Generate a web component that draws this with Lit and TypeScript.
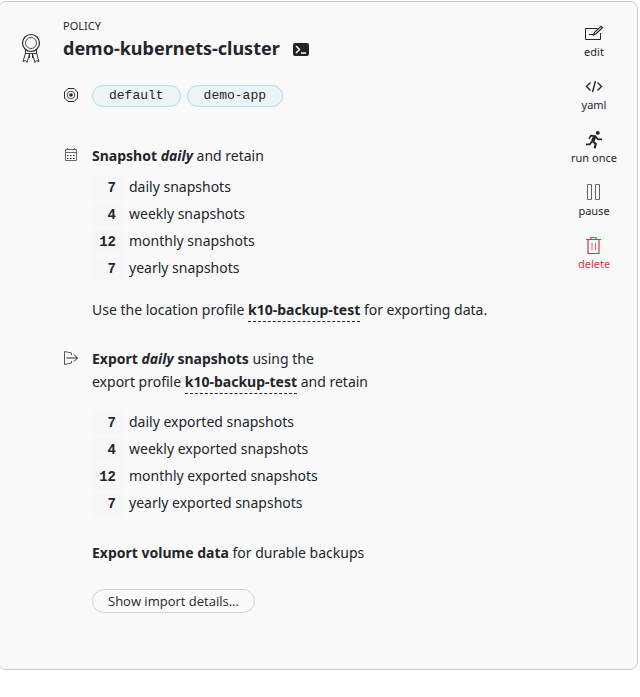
import { LitElement, html, css, svg } from "lit";
import { customElement, property } from "lit/decorators.js";

type Row = { count: number; label: string };

const snapshotRows: Row[] = [
  { count: 7, label: "daily snapshots" },
  { count: 4, label: "weekly snapshots" },
  { count: 12, label: "monthly snapshots" },
  { count: 7, label: "yearly snapshots" },
];

const exportRows: Row[] = [
  { count: 7, label: "daily exported snapshots" },
  { count: 4, label: "weekly exported snapshots" },
  { count: 12, label: "monthly exported snapshots" },
  { count: 7, label: "yearly exported snapshots" },
];

const icons = {
  edit: svg`<path d="M12.500 3.500H.5v11h15V8"/><path d="M4 9.500H9"/><path d="M8.500 9.800l1-2.500 6.500-6 1.500 1.500-6.500 6z" stroke-width="1.200"/>`,
  yaml: svg`<path d="M5.500 4.500L1.500 8.500l4 4M12.500 4.500l4 4-4 4" stroke-width="1.400"/><path d="M10.500 3L7.500 14" stroke-width="1.400"/>`,
  run: svg`<circle cx="12.800" cy="1.900" r="1.900" fill="currentColor" stroke="none"/><path d="M4 7.600l2-3 4.200.4 2.500 3.200 4.300.2M1 13.300h3.800l2.200-3" stroke-width="1.700"/><path d="M10 5L7.300 10l3.400 2.700-1 4.600" stroke-width="2.100"/><path d="M9.800 5.500L8 9.500" stroke-width="3.200"/>`,
  pause: svg`<path d="M2.500 .5h4v15h-4zM10.500 .5h4v15h-4z" stroke="#666"/>`,
  delete: svg`<path d="M1 2.500h15M6 2V.5h5V2" stroke-width="1.200"/><path d="M3 3v13.500h11V3" stroke-width="1.200"/><path d="M7 6v7M10.500 6v7" opacity=".8"/>`,
};

@customElement("action-button")
class ActionButton extends LitElement {
  @property() icon: keyof typeof icons = "edit";
  @property() label = "";

  static styles = css`
    :host { display: block; }
    .action {
      display: flex;
      flex-direction: column;
      align-items: center;
      gap: 1px;
      width: 100%;
      padding: 0;
      border: 0;
      background: none;
      color: #22262b;
      font: 11px/16px "Noto Sans", sans-serif;
      cursor: pointer;
    }
    .danger { color: #dc3545; }
    svg {
      width: 18px;
      height: 18px;
      fill: none;
      stroke: currentColor;
      overflow: visible;
    }
  `;

  render() {
    return html`<button class="action ${this.icon === "delete" ? "danger" : ""}" type="button">
      <svg viewBox="0 0 18 18" aria-hidden="true">${icons[this.icon]}</svg>
      <span>${this.label}</span>
    </button>`;
  }
}

@customElement("retention-list")
class RetentionList extends LitElement {
  @property({ attribute: false }) rows: Row[] = [];

  static styles = css`
    :host { display: block; }
    .list {
      display: grid;
      gap: 4px;
      margin: 0;
      padding: 0;
      list-style: none;
    }
    .row { display: flex; align-items: baseline; gap: 5px; height: 23px; line-height: 23px; }
    .count {
      box-sizing: border-box;
      width: 32px;
      padding-right: 8px;
      background: #f7f7f7;
      text-align: right;
      font-family: "Liberation Mono", monospace;
      font-size: 14px;
      font-weight: 700;
    }
  `;

  render() {
    return html`<ul class="list">
      ${this.rows.map(
        (r) => html`<li class="row"><span class="count">${r.count}</span><span>${r.label}</span></li>`,
      )}
    </ul>`;
  }
}

@customElement("app-root")
class AppRoot extends LitElement {
  static styles = css`
    :host {
      display: block;
      color: #22262b;
      font: 14px/23px "Noto Sans", sans-serif;
    }
    .card {
      display: grid;
      grid-template-columns: 64px 1fr 60px;
      margin: 1px 2px 0 -2px;
      padding: 16px 13px 56px 0;
      border: 1px solid #c9cbcc;
      border-radius: 8px;
      background: #f9f9f9;
    }
    svg { fill: none; stroke: currentColor; }
    .medal { width: 20px; height: 32px; margin: 14px 0 0 22px; }
    .kind { font-size: 11px; line-height: 16px; }
    .title { display: flex; align-items: center; gap: 13px; }
    h1 { margin: 0; font-size: 18px; line-height: 29px; }
    .terminal { width: 16px; height: 16px; }
    .section { display: grid; grid-template-columns: 29px 1fr; }
    .icon { width: 16px; height: 16px; margin-top: 3px; }
    .targets { margin-top: 22px; }
    .chips { display: flex; gap: 6px; }
    .chip {
      padding: 0 16px;
      border: 1px solid #a9dfe9;
      border-radius: 11px;
      background: #edf4f7;
      font: 13px/20px "Liberation Mono", monospace;
    }
    .snapshot { margin-top: 37px; }
    .export { margin-top: 26px; }
    p { margin: 0; }
    .rows { margin-top: 8px; }
    .export-rows { margin-top: 17px; }
    .location { margin-top: 19px; }
    .volume { margin-top: 27px; }
    .profile {
      border-bottom: 1px dashed #22262b;
      padding-bottom: 2px;
      color: inherit;
      font-weight: 700;
      text-decoration: none;
    }
    .details {
      margin-top: 25px;
      padding: 0 15px;
      border: 1px solid #d0d2d4;
      border-radius: 12px;
      background: #fafafa;
      color: inherit;
      font: 13px/22px "Open Sans", sans-serif;
    }
    .actions { display: flex; flex-direction: column; gap: 18px; padding-top: 7px; }
  `;

  render() {
    return html`<main class="card">
      <svg class="medal" viewBox="0 0 20 32" aria-hidden="true">
        <circle cx="10" cy="11" r="8.500" stroke-width="1.200" />
        <circle cx="10" cy="11" r="5.500" stroke-width=".8" />
        <path d="M4.500 18v3.500h11V18M4.500 21L2 29.500l2.500-1L6 30.500 8.500 22M11.500 22l2.500 8.500 1.500-2 2.500 1L15.500 21M8.500 22v4M11.500 22v4" stroke-width=".9" />
      </svg>
      <div>
        <div class="kind">POLICY</div>
        <div class="title">
          <h1>demo-kubernets-cluster</h1>
          <svg class="terminal" viewBox="0 0 16 16" role="img" aria-label="Terminal">
            <rect x="0" y="2" width="16" height="13" rx="2" fill="currentColor" stroke="none" />
            <path d="M3 5l3.500 3.500L3 12M8 12h5" stroke="#f9f9f9" stroke-width="1.500" />
          </svg>
        </div>
        <section class="section targets">
          <svg class="icon" viewBox="0 0 16 16" aria-hidden="true">
            <path d="M5 .5h6L14.500 4v6L11 13.500H5L1.500 10V4z" />
            <circle cx="8" cy="7" r="3.800" stroke-width=".8" />
            <circle cx="8" cy="7" r="1.800" fill="currentColor" stroke="none" />
          </svg>
          <div class="chips"><span class="chip">default</span><span class="chip">demo-app</span></div>
        </section>
        <section class="section snapshot">
          <svg class="icon" viewBox="0 0 16 16" aria-hidden="true">
            <path d="M2.500 2.500h11v11h-11zM2.500 5.500h11M4.500 1v2M11.500 1v2" stroke="#666" />
            <path d="M4 8.500h8M4 11.500h8" stroke-dasharray="1.500 1.500" />
          </svg>
          <div>
            <p><b>Snapshot <i>daily</i></b> and retain</p>
            <retention-list class="rows" .rows=${snapshotRows}></retention-list>
            <p class="location">Use the location profile <a class="profile" href="#profile">k10-backup-test</a> for exporting data.</p>
          </div>
        </section>
        <section class="section export">
          <svg class="icon" viewBox="0 0 16 16" aria-hidden="true">
            <path d="M8.500 5V3L1.500 1.500v13l7-1.500v-2" stroke="#555" />
            <path d="M3.500 8h10.500M11 4.500L14.500 8l-3.500 3.500" />
          </svg>
          <div>
            <p><b>Export <i>daily</i> snapshots</b> using the<br />export profile
              <a class="profile" href="#profile">k10-backup-test</a> and retain</p>
            <retention-list class="export-rows" .rows=${exportRows}></retention-list>
            <p class="volume"><b>Export volume data</b> for durable backups</p>
            <button class="details" type="button">Show import details...</button>
          </div>
        </section>
      </div>
      <nav class="actions" aria-label="Policy actions">
        <action-button icon="edit" label="edit"></action-button>
        <action-button icon="yaml" label="yaml"></action-button>
        <action-button icon="run" label="run once"></action-button>
        <action-button icon="pause" label="pause"></action-button>
        <action-button icon="delete" label="delete"></action-button>
      </nav>
    </main>`;
  }
}
